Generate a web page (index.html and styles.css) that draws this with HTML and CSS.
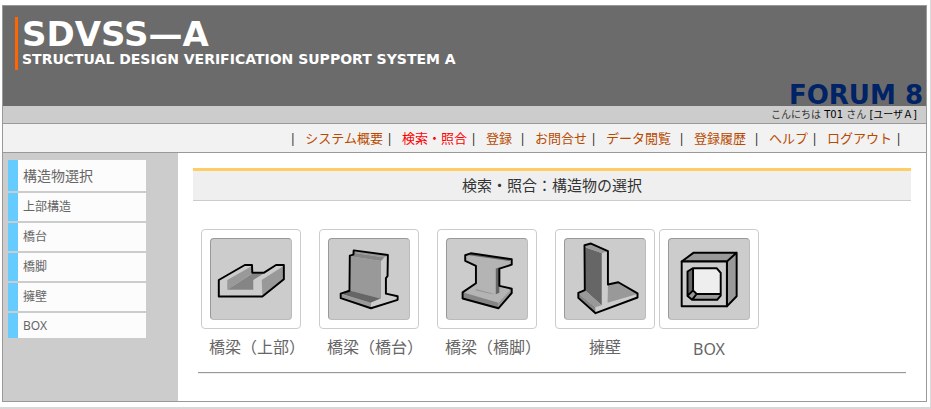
FILE: index.html
```html
<!DOCTYPE html>
<html lang="ja">
<head>
    <meta charset="UTF-8">
    <meta name="viewport" content="width=device-width, initial-scale=1.0">
    <title>SDVSS-A</title>
    <link rel="stylesheet" href="styles.css">
</head>
<body>
    <div class="container">
        <header class="header">
            <div class="logo">
                <h1>SDVSS—A</h1>
                <p>STRUCTUAL DESIGN VERIFICATION SUPPORT SYSTEM A</p>
            </div>
            <div class="company">FORUM 8</div>
        </header>

        <div class="greeting">こんにちは <span>T01</span> さん <span>[ユーザＡ]</span></div>

        <nav class="menu">
            <span>|</span>
            <a href="#">システム概要</a><span>|</span>
            <a href="#" class="active">検索・照合</a><span>|</span>
            <a href="#" class="wide">登録</a><span>|</span>
            <a href="#">お問合せ</a><span>|</span>
            <a href="#" class="wide">データ閲覧</a><span>|</span>
            <a href="#" class="wide">登録履歴</a><span>|</span>
            <a href="#">ヘルプ</a><span>|</span>
            <a href="#">ログアウト</a><span>|</span>
        </nav>

        <div class="content">
            <aside class="sidebar">
                <h2>構造物選択</h2>
                <ul>
                    <li><a href="#">上部構造</a></li>
                    <li><a href="#">橋台</a></li>
                    <li><a href="#">橋脚</a></li>
                    <li><a href="#">擁壁</a></li>
                    <li class="latin"><a href="#">BOX</a></li>
                </ul>
            </aside>

            <main class="main">
                <h2 class="title">検索・照合：構造物の選択</h2>

                <div class="tiles">
                    <a href="#" class="tile bridge">
                        <span class="frame">
                            <svg viewBox="60 54 246 246" aria-hidden="true">
                                <path class="c-light" d="M84 180L164 134H186L187 158H222L260 134H284V178L218 231H84Z"/>
                                <path class="c-mid" d="M110 180L186 137V160L110 210ZM216 180L284 136V178L218 230Z"/>
                                <path class="c-floor" d="M110 210L187 160H222L190 180V210Z"/>
                                <path class="edge" d="M84 180L164 134H186L187 158H222L260 134H284V178L218 231H84Z"/>
                            </svg>
                        </span>
                        <span class="label">橋梁（上部）</span>
                    </a>
                    <a href="#" class="tile bridge">
                        <span class="frame">
                            <svg viewBox="54 54 246 246" aria-hidden="true">
                                <path class="c-light" d="M130 89L235 103L234 168L229 174V222L265 230V241L183 267L90 236V222L117 213L118 105L129 102Z"/>
                                <path class="c-mid" d="M120 107L214 122V238L120 214ZM90 223L183 250V267L90 236ZM130 91L233 105L224 111L130 96Z"/>
                                <path class="c-floor" d="M130 96L224 111L214 122L120 107L130 103Z"/>
                                <path class="c-dark" d="M93 223L120 213L212 237L182 250Z"/>
                                <path class="edge" d="M130 89L235 103L234 168L229 174V222L265 230V241L183 267L90 236V222L117 213L118 105L129 102Z"/>
                            </svg>
                        </span>
                        <span class="label">橋梁（橋台）</span>
                    </a>
                    <a href="#" class="tile bridge">
                        <span class="frame">
                            <svg viewBox="48 54 246 246" aria-hidden="true">
                                <path class="c-pier" d="M121 98L247 116V133L209 145V198L247 207V220L206 267L96 237V218L137 190V137L104 121V104Z"/>
                                <path class="c-dark" d="M121 98L247 116L240 122L116 104ZM198 145L209 142V219L198 224Z"/>
                                <path class="c-floor" d="M96 218L206 250V267L96 237Z"/>
                                <path class="c-mid" d="M206 250L247 207V220L206 267ZM137 208L198 224L180 222L137 212Z"/>
                                <path class="edge" d="M121 98L247 116V133L209 145V198L247 207V220L206 267L96 237V218L137 190V137L104 121V104Z"/>
                            </svg>
                        </span>
                        <span class="label">橋梁（橋脚）</span>
                    </a>
                    <a href="#" class="tile">
                        <span class="frame">
                            <svg viewBox="57 54 246 246" aria-hidden="true">
                                <path class="c-light" d="M117 73L137 68L189 91V194L221 187L280 221V234L151 282L98 235V220L118 211Z"/>
                                <path class="c-dark" d="M119 79L170 97V258L119 212Z"/>
                                <path class="c-mid" d="M117 73L137 68L189 91L170 98L119 79ZM189 194L221 187L280 223L188 250ZM98 221L119 212L170 258L150 264Z"/>
                                <path class="c-floor" d="M98 221L150 264L151 282L98 235Z"/>
                                <path class="edge" d="M117 73L137 68L189 91V194L221 187L280 221V234L151 282L98 235V220L118 211Z"/>
                            </svg>
                        </span>
                        <span class="label">擁壁</span>
                    </a>
                    <a href="#" class="tile latin">
                        <span class="frame">
                            <svg viewBox="369 54 246 246" aria-hidden="true">
                                <path class="c-mid edge" d="M408 123L445 96H577L547 123ZM547 123L577 96V230L547 261Z"/>
                                <path class="c-light edge" d="M408 123H547V261H408Z"/>
                                <path class="c-white" d="M443 144H516L528 158V223H454L443 212Z"/>
                                <path class="c-dark" d="M426 154L443 144V212L426 229Z"/>
                                <path class="c-mid" d="M426 229L443 212L454 223H528V228L517 241H440Z"/>
                                <path class="edge" d="M426 154L442 144H516L528 158V228L517 241H440L426 229ZM443 144V212L454 223H528M426 229L443 212M440 241L454 223"/>
                            </svg>
                        </span>
                        <span class="label">BOX</span>
                    </a>
                </div>
                <hr>
            </main>
        </div>
    </div>
</body>
</html>
```
FILE: styles.css
```css
* {
    box-sizing: border-box;
}

body {
    margin: 0;
    padding: 5px 3px 5px 2px;
    border-right: 1px solid #d8d8d8;
    border-bottom: 2px solid #d8d8d8;
    background-color: #fff;
    font-family: "Noto Sans", "Noto Sans CJK JP", sans-serif;
    color: #666;
}

a {
    text-decoration: none;
}

.container {
    border: 1px solid #999;
}

/* header */
.header {
    display: flex;
    justify-content: space-between;
    height: 100px;
    padding: 11px 3px 0 12px;
    background-color: #6b6b6b;
    font-family: "DejaVu Sans", sans-serif;
    font-weight: bold;
}

.logo {
    height: 53px;
    padding-left: 4px;
    border-left: 3px solid #ff6600;
    color: #fff;
    white-space: nowrap;
}

.logo h1 {
    margin: 0;
    font-size: 34px;
    line-height: 34px;
}

.logo p {
    margin: 0;
    font-size: 14px;
    line-height: 16px;
}

.company {
    align-self: flex-end;
    font-size: 26px;
    line-height: 22px;
    color: #002266;
}

.greeting {
    height: 18px;
    padding-right: 9px;
    border-bottom: 1px solid #999;
    background-color: #ccc;
    font-family: "DejaVu Sans", "Noto Sans CJK JP", sans-serif;
    font-size: 10px;
    line-height: 18px;
    text-align: right;
    color: #333;
}

.greeting span {
    color: #000;
}

.menu {
    display: flex;
    justify-content: flex-end;
    padding-right: 24px;
    border-bottom: 1px solid #999;
    background-color: #f2f2f2;
    font-size: 13px;
    line-height: 28px;
    color: #333;
}

.menu span {
    width: 7px;
    text-align: center;
}

.menu a {
    margin: 0 3px 0 9px;
    color: #b84a00;
}

.menu .wide {
    margin-right: 7px;
}

.menu .active {
    color: #ff0000;
}

/* main area */
.content {
    display: flex;
}

.sidebar {
    width: 175px;
    padding: 7px 32px 0 5px;
    background-color: #ccc;
}

.sidebar h2,
.sidebar li {
    margin: 0 0 2px;
    padding-left: 5px;
    border-left: 10px solid #66ccff;
    background-color: #fcfcfc;
}

.sidebar h2 {
    font-size: 14px;
    font-weight: normal;
    line-height: 31px;
}

.sidebar ul {
    margin: 0;
    padding: 0;
    list-style: none;
}

.sidebar li {
    font-size: 12px;
    line-height: 28px;
}

.sidebar .latin {
    line-height: 25px;
}

.sidebar a {
    color: #666;
}

.main {
    flex: 1;
    padding: 15px 15px 27px;
}

.title {
    margin: 0;
    border-top: 3px solid #ffcc66;
    border-bottom: 1px solid #ccc;
    background-color: #efefef;
    font-size: 15px;
    font-weight: normal;
    line-height: 29px;
    text-align: center;
    color: #333;
}

.tiles {
    display: flex;
    gap: 18px;
    padding: 28px 8px 0;
}

.tile {
    width: 100px;
    color: #666;
    text-align: center;
}

.tile.latin {
    margin-left: -14px;
}

.frame {
    display: block;
    height: 100px;
    padding: 8px;
    border: 1px solid #ccc;
    border-radius: 4px;
}

.frame svg {
    display: block;
    width: 82px;
    height: 82px;
    border: 1px solid #bbb;
    border-top-color: #999;
    border-left-color: #999;
    border-radius: 4px;
    background-color: #ccc;
}

.label {
    display: block;
    font-size: 16px;
    line-height: 36px;
    white-space: nowrap;
}

.tile.bridge .label {
    padding-left: 8px;
}

.tile.latin .label {
    line-height: 40px;
}

hr {
    margin: 3px 5px 0;
    border: 0;
    border-top: 1px solid #999;
    border-bottom: 1px solid #eee;
}

/* icon colours */
.c-white { fill: #eee; }
.c-light { fill: #ccc; }
.c-pier { fill: #b4b4b4; }
.c-mid { fill: #999; }
.c-floor { fill: #858585; }
.c-dark { fill: #666; }

.edge {
    stroke: #000;
    stroke-width: 6;
    stroke-linejoin: round;
}

.edge:not(.c-mid):not(.c-light) {
    fill: none;
}
```
